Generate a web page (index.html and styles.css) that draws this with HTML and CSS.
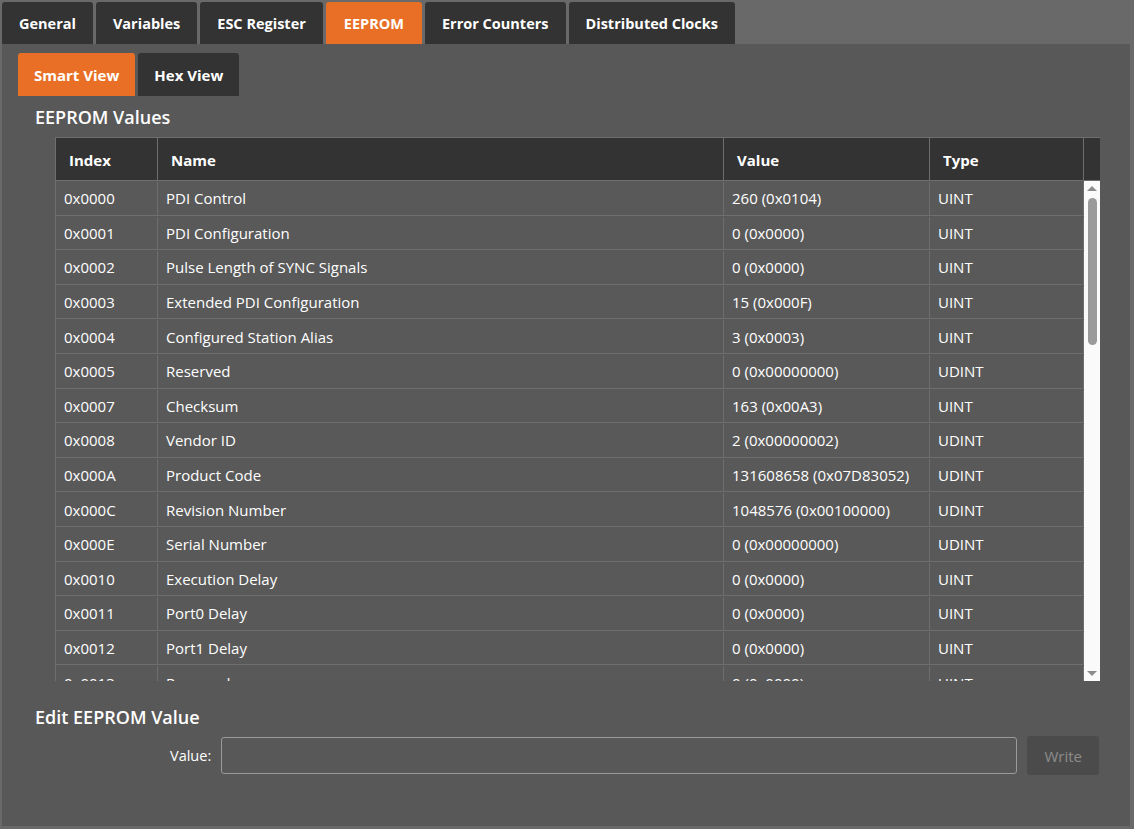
FILE: index.html
```html
<!DOCTYPE html>
<html lang="en">
<head>
  <meta charset="utf-8">
  <title>EEPROM</title>
  <link rel="stylesheet" href="styles.css">
</head>
<body>
  <div class="tabs">
    <div class="tab">General</div>
    <div class="tab">Variables</div>
    <div class="tab">ESC Register</div>
    <div class="tab active">EEPROM</div>
    <div class="tab">Error Counters</div>
    <div class="tab">Distributed Clocks</div>
  </div>
  <div class="panel">
    <div class="subtabs">
      <div class="subtab active">Smart View</div>
      <div class="subtab">Hex View</div>
    </div>

    <h2 class="section-title">EEPROM Values</h2>
    <div class="grid">
      <div class="grid-head">
        <div class="col c-index">Index</div>
        <div class="col c-name">Name</div>
        <div class="col c-value">Value</div>
        <div class="col c-type">Type</div>
        <div class="gutter"></div>
      </div>
      <div class="grid-body">
        <div class="rows" id="rows"></div>
        <div class="scrollbar">
          <div class="arrow up"></div>
          <div class="track"><div class="thumb"></div></div>
          <div class="arrow down"></div>
        </div>
      </div>
    </div>

    <h2 class="section-title edit-title">Edit EEPROM Value</h2>
    <div class="edit-row">
      <label class="edit-label">Value:</label>
      <input type="text" class="edit-input">
      <button type="button" class="write-btn" disabled>Write</button>
    </div>
  </div>

  <script>
    let data = [
      ["0x0000", "PDI Control", "260 (0x0104)", "UINT"],
      ["0x0001", "PDI Configuration", "0 (0x0000)", "UINT"],
      ["0x0002", "Pulse Length of SYNC Signals", "0 (0x0000)", "UINT"],
      ["0x0003", "Extended PDI Configuration", "15 (0x000F)", "UINT"],
      ["0x0004", "Configured Station Alias", "3 (0x0003)", "UINT"],
      ["0x0005", "Reserved", "0 (0x00000000)", "UDINT"],
      ["0x0007", "Checksum", "163 (0x00A3)", "UINT"],
      ["0x0008", "Vendor ID", "2 (0x00000002)", "UDINT"],
      ["0x000A", "Product Code", "131608658 (0x07D83052)", "UDINT"],
      ["0x000C", "Revision Number", "1048576 (0x00100000)", "UDINT"],
      ["0x000E", "Serial Number", "0 (0x00000000)", "UDINT"],
      ["0x0010", "Execution Delay", "0 (0x0000)", "UINT"],
      ["0x0011", "Port0 Delay", "0 (0x0000)", "UINT"],
      ["0x0012", "Port1 Delay", "0 (0x0000)", "UINT"],
      ["0x0013", "Reserved", "0 (0x0000)", "UINT"]
    ];
    let rows = document.getElementById("rows");
    let classes = ["c-index", "c-name", "c-value", "c-type"];

    data.forEach(item => {
      let row = document.createElement("div");
      row.className = "row";
      item.forEach((text, i) => {
        let cell = document.createElement("div");
        cell.className = "col " + classes[i];
        cell.textContent = text;
        row.appendChild(cell);
      });
      rows.appendChild(row);
    });
  </script>
</body>
</html>
```

FILE: styles.css
```css
body{
  margin: 0;
  height: 829px;
  background: #696969;
  font-family: "Open Sans", "Noto Sans", sans-serif;
  font-size: 15px;
  color: #ffffff;
  overflow: hidden;
}
.tabs{
  display: flex;
  gap: 3px;
  padding: 2px 0 0 2px;
  height: 42px;
}
.tab{
  display: flex;
  align-items: center;
  padding: 0 17px;
  background: #333333;
  border-radius: 3px 3px 0 0;
  font-weight: 700;
  font-size: 14.5px;
}
.tab.active{
  background: #e86f25;
  padding: 0 18px;
}
.panel{
  margin-left: 2px;
  width: 1129px;
  height: 782px;
  box-sizing: border-box;
  background: #585858;
  border-right: 1px solid #6a6a6a;
  padding: 9px 0 0 16px;
}
.subtabs{
  display: flex;
  gap: 3px;
  height: 43px;
}
.subtab{
  display: flex;
  align-items: center;
  padding: 0 16px;
  background: #333333;
  border-radius: 3px 3px 0 0;
  font-weight: 700;
  font-size: 15px;
}
.subtab.active{
  background: #e86f25;
}
.section-title{
  margin: 9px 0 0 17px;
  font-size: 18px;
  font-weight: 600;
  line-height: 24px;
}
.grid{
  margin: 8px 0 0 37px;
  width: 1045px;
  border-left: 1px solid #6e6e6e;
  box-sizing: border-box;
}
.grid-head{
  display: flex;
  height: 42px;
  background: #333333;
  border-top: 1px solid #6e6e6e;
  border-bottom: 1px solid #6e6e6e;
  box-sizing: content-box;
  font-weight: 700;
}
.grid-head .col{
  padding-left: 13px;
  padding-top: 1px;
}
.col{
  display: flex;
  align-items: center;
  box-sizing: border-box;
  border-right: 1px solid #6e6e6e;
  padding-left: 8px;
  white-space: nowrap;
}
.c-index{ width: 102px; }
.c-name{ width: 566px; }
.c-value{ width: 206px; }
.c-type{ width: 154px; }
.gutter{
  flex: 1;
}
.grid-body{
  display: flex;
  height: 500px;
  overflow: hidden;
}
.rows{
  width: 1028px;
}
.row{
  display: flex;
  height: 34.6px;
  box-sizing: border-box;
  border-bottom: 1px solid #6e6e6e;
  background: #595959;
  padding-top: 1px;
}
.scrollbar{
  width: 16px;
  background: #fafafa;
  display: flex;
  flex-direction: column;
  align-items: center;
}
.arrow{
  width: 0;
  height: 0;
  border-left: 5px solid transparent;
  border-right: 5px solid transparent;
}
.arrow.up{
  margin-top: 5px;
  border-bottom: 5px solid #8c8c8c;
}
.arrow.down{
  margin-bottom: 5px;
  border-top: 5px solid #8c8c8c;
}
.track{
  flex: 1;
  width: 9px;
  padding-top: 7px;
}
.thumb{
  height: 147px;
  background: #9a9a9a;
  border-radius: 5px;
}
.edit-title{
  margin-top: 24px;
}
.edit-row{
  display: flex;
  align-items: center;
  margin-top: 7px;
  padding-left: 152px;
}
.edit-label{
  font-size: 14.5px;
  margin-right: 10px;
}
.edit-input{
  width: 796px;
  height: 37px;
  box-sizing: border-box;
  background: #585858;
  border: 1px solid #9a9a9a;
  border-radius: 3px;
  outline: none;
  color: #ffffff;
}
.write-btn{
  margin-left: 10px;
  width: 72px;
  height: 39px;
  border: none;
  border-radius: 3px;
  background: #4b4b4b;
  color: #8c8c8c;
  font-family: inherit;
  font-size: 15px;
}
```
